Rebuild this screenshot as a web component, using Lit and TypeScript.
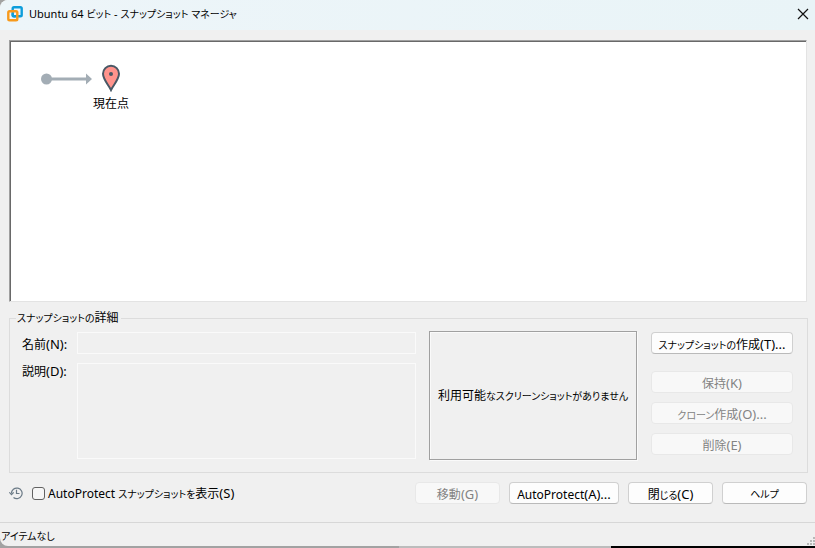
import { LitElement, html, css, svg } from "lit";
import { customElement, state } from "lit/decorators.js";

const logo = svg`
  <svg class="logo" viewBox="0 0 16 16" width="16" height="16" aria-hidden="true">
    <rect x="5.7" y="1.2" width="9" height="9" rx="1.3" fill="none" stroke="#0d9ddb" stroke-width="2.4" />
    <rect x="1.3" y="5.3" width="9" height="9" rx="1.3" fill="none" stroke="#f79a1c" stroke-width="2.4" />
    <path d="M5.7 7.2V8.9Q5.7 10.2 7 10.2H8.6" fill="none" stroke="#0d9ddb" stroke-width="2.4" />
  </svg>`;

// Kana are set smaller than kanji, and access keys larger than the words before them.
const label = (text: string) =>
  text
    .split(/([\u3040-\u30ff]+|\([A-Z]\)[:.]*)/)
    .filter((part) => part)
    .map((part) =>
      /^[\u3040-\u30ff]/.test(part)
        ? html`<span class="kana">${part}</span>`
        : /^\(/.test(part)
          ? html`<span class="key">${part}</span>`
          : part
    );

@customElement("app-root")
export class AppRoot extends LitElement {
  @state() private showAuto = false;

  static styles = css`
    :host {
      display: block;
      font-family: "Noto Sans", "Noto Sans CJK JP", sans-serif;
      font-size: 12px;
      line-height: 16px;
      color: #000;
      background: linear-gradient(90deg, #a2a2a2 0 49%, #bcbcbc 49% 75%, #000 75%);
    }
    * {
      box-sizing: border-box;
    }
    .window {
      display: flex;
      flex-direction: column;
      min-height: calc(100vh - 2px);
      background: #f0f0f0;
      border-radius: 8px 0 0 8px;
      overflow: hidden;
    }
    .page {
      padding-bottom: 2px;
    }
    .kana {
      font-size: 10px;
      font-feature-settings: "palt";
    }
    .key {
      font-size: 13px;
    }
    .title {
      display: flex;
      align-items: center;
      gap: 6px;
      height: 30px;
      padding: 0 6px 2px 7px;
      background: linear-gradient(90deg, #edf5f9, #e9f4f7);
    }
    .title h1 {
      flex: 1;
      margin: 0;
      font-size: 11px;
      font-weight: 400;
    }
    .close {
      display: flex;
      padding: 0;
      border: 0;
      background: none;
    }
    .main {
      display: flex;
      flex: 1;
      flex-direction: column;
      padding: 10px 7px 18px 9px;
    }
    .canvas {
      flex: 1;
      min-height: 160px;
      margin-right: 1px;
      padding: 23px 30px;
      background: #fff;
      border: 1px solid #e3e3e3;
      border-top-color: #a0a0a0;
      border-left-color: #a0a0a0;
      box-shadow: inset 1px 1px #696969;
    }
    .tree {
      display: flex;
      align-items: flex-start;
      gap: 1px;
    }
    .arrow {
      margin-top: 9px;
    }
    .node {
      display: flex;
      flex-direction: column;
      align-items: center;
      gap: 4px;
    }
    fieldset {
      min-width: 0;
      margin: 8px 0 0;
      padding: 5px 14px 12px 12px;
      border: 1px solid #dcdcdc;
    }
    legend {
      margin-left: -6px;
      padding: 0 2px 0 1px;
      line-height: 16px;
    }
    .details {
      display: flex;
    }
    .form {
      display: grid;
      flex: 1;
      grid-template-columns: 55px 1fr;
      grid-template-rows: 22px 1fr;
      row-gap: 9px;
      padding: 1px 0;
    }
    .form label:first-child {
      padding-top: 4px;
    }
    .field {
      width: 100%;
      height: 100%;
      margin: 0;
      padding: 2px 4px;
      border: 1px solid #fafafa;
      background: #f0f0f0;
      font: inherit;
      resize: none;
    }
    .preview {
      display: flex;
      align-items: center;
      justify-content: center;
      width: 208px;
      height: 129px;
      margin: 0 14px 0 13px;
      border: 1px solid #a0a0a0;
      box-shadow: inset 1px 1px #fafafa, 1px 1px #fafafa;
      white-space: nowrap;
    }
    .actions {
      display: flex;
      flex-direction: column;
      gap: 9px;
      width: 142px;
      padding-top: 1px;
    }
    .actions .btn:first-child {
      margin-bottom: 8px;
    }
    .btn {
      height: 22px;
      padding: 2px 4px 0;
      border: 1px solid #d0d0d0;
      border-bottom-color: #bababa;
      border-radius: 4px;
      background: #fdfdfd;
      color: #000;
      font-family: inherit;
      font-size: 12px;
      line-height: 16px;
      white-space: nowrap;
    }
    .btn:disabled {
      border-color: #e8e8e8;
      background: #f8f8f8;
      color: #838383;
    }
    .footer {
      display: flex;
      align-items: center;
      gap: 9px;
      margin-top: 9px;
      padding-right: 1px;
    }
    .footer .btn {
      width: 85px;
    }
    .footer .wide {
      width: 110px;
    }
    .auto {
      display: flex;
      flex: 1;
      align-items: center;
      gap: 3px;
    }
    .check {
      appearance: none;
      width: 13px;
      height: 13px;
      margin: 0;
      border: 1px solid #626262;
      border-radius: 3px;
      background: #f6f6f6;
    }
    .check:checked {
      background: #0067c0;
    }
    .status {
      display: flex;
      align-items: flex-end;
      justify-content: space-between;
      height: 24px;
      padding-left: 1px;
      border-top: 1px solid #d7d7d7;
    }
    .status p {
      align-self: center;
      margin: 0;
      padding-top: 2px;
    }
  `;

  render() {
    return html`
      <div class="page">
        <div class="window">
          <header class="title">
            ${logo}
            <h1>${label("Ubuntu 64 ビット - スナップショット マネージャ")}</h1>
            <button class="close" aria-label="閉じる">
              <svg width="12" height="12" viewBox="0 0 12 12">
                <path d="M1 1L11 11M11 1L1 11" stroke="#111" stroke-width="1.2" />
              </svg>
            </button>
          </header>
          <main class="main">
            <section class="canvas">
              <div class="tree">
                <svg class="arrow" width="52" height="12" viewBox="0 0 52 12">
                  <g fill="#a3adb5">
                    <circle cx="6.5" cy="6" r="5.5" />
                    <path d="M10 4.5H46V0.5L52 6L46 11.5V7.5H10Z" />
                  </g>
                </svg>
                <div class="node">
                  <svg width="20" height="28" viewBox="0 0 20 28">
                    <path
                      d="M10 26C8 21.5 2 15.5 2 9.8A8 8 0 0 1 18 9.8C18 15.5 12 21.5 10 26Z"
                      fill="#ff938c" stroke="#495865" stroke-width="2" />
                    <circle cx="10" cy="10" r="2" fill="#495865" />
                  </svg>
                  <span>現在点</span>
                </div>
              </div>
            </section>
            <fieldset>
              <legend>${label("スナップショットの詳細")}</legend>
              <div class="details">
                <div class="form">
                  <label for="name">${label("名前(N):")}</label>
                  <input class="field" id="name" disabled />
                  <label for="desc">${label("説明(D):")}</label>
                  <textarea class="field" id="desc" disabled></textarea>
                </div>
                <div class="preview">
                  <div>${label("利用可能なスクリーンショットがありません")}</div>
                </div>
                <div class="actions">
                  <button class="btn">${label("スナップショットの作成(T)...")}</button>
                  <button class="btn" disabled>${label("保持(K)")}</button>
                  <button class="btn" disabled>${label("クローン作成(O)...")}</button>
                  <button class="btn" disabled>${label("削除(E)")}</button>
                </div>
              </div>
            </fieldset>
            <div class="footer">
              <svg width="14" height="14" viewBox="0 0 14 14" fill="none" stroke="#6b7a86" stroke-width="1.2">
                <path d="M2.5 7.5A5.3 5.3 0 1 1 4.5 11.5" />
                <path d="M0.3 6.3L2.5 8.6L4.7 6.3M7.5 3.8V7.5H10.5" />
              </svg>
              <div class="auto">
                <input class="check" type="checkbox" id="auto" .checked=${this.showAuto}
                  @change=${(e: Event) => (this.showAuto = (e.target as HTMLInputElement).checked)} />
                <label for="auto">${label("AutoProtect スナップショットを表示(S)")}</label>
              </div>
              <button class="btn" disabled>${label("移動(G)")}</button>
              <button class="btn wide">${label("AutoProtect(A)...")}</button>
              <button class="btn">${label("閉じる(C)")}</button>
              <button class="btn">${label("ヘルプ")}</button>
            </div>
          </main>
          <footer class="status">
            <p>${label("アイテムなし")}</p>
            <svg width="8" height="9" viewBox="0 0 8 9" fill="#b8b8b8">
              <path d="M6 0h2v2h-2zM3 3h2v2h-2zM6 3h2v2h-2zM0 6h2v2h-2zM3 6h2v2h-2zM6 6h2v2h-2z" />
            </svg>
          </footer>
        </div>
      </div>
    `;
  }
}
